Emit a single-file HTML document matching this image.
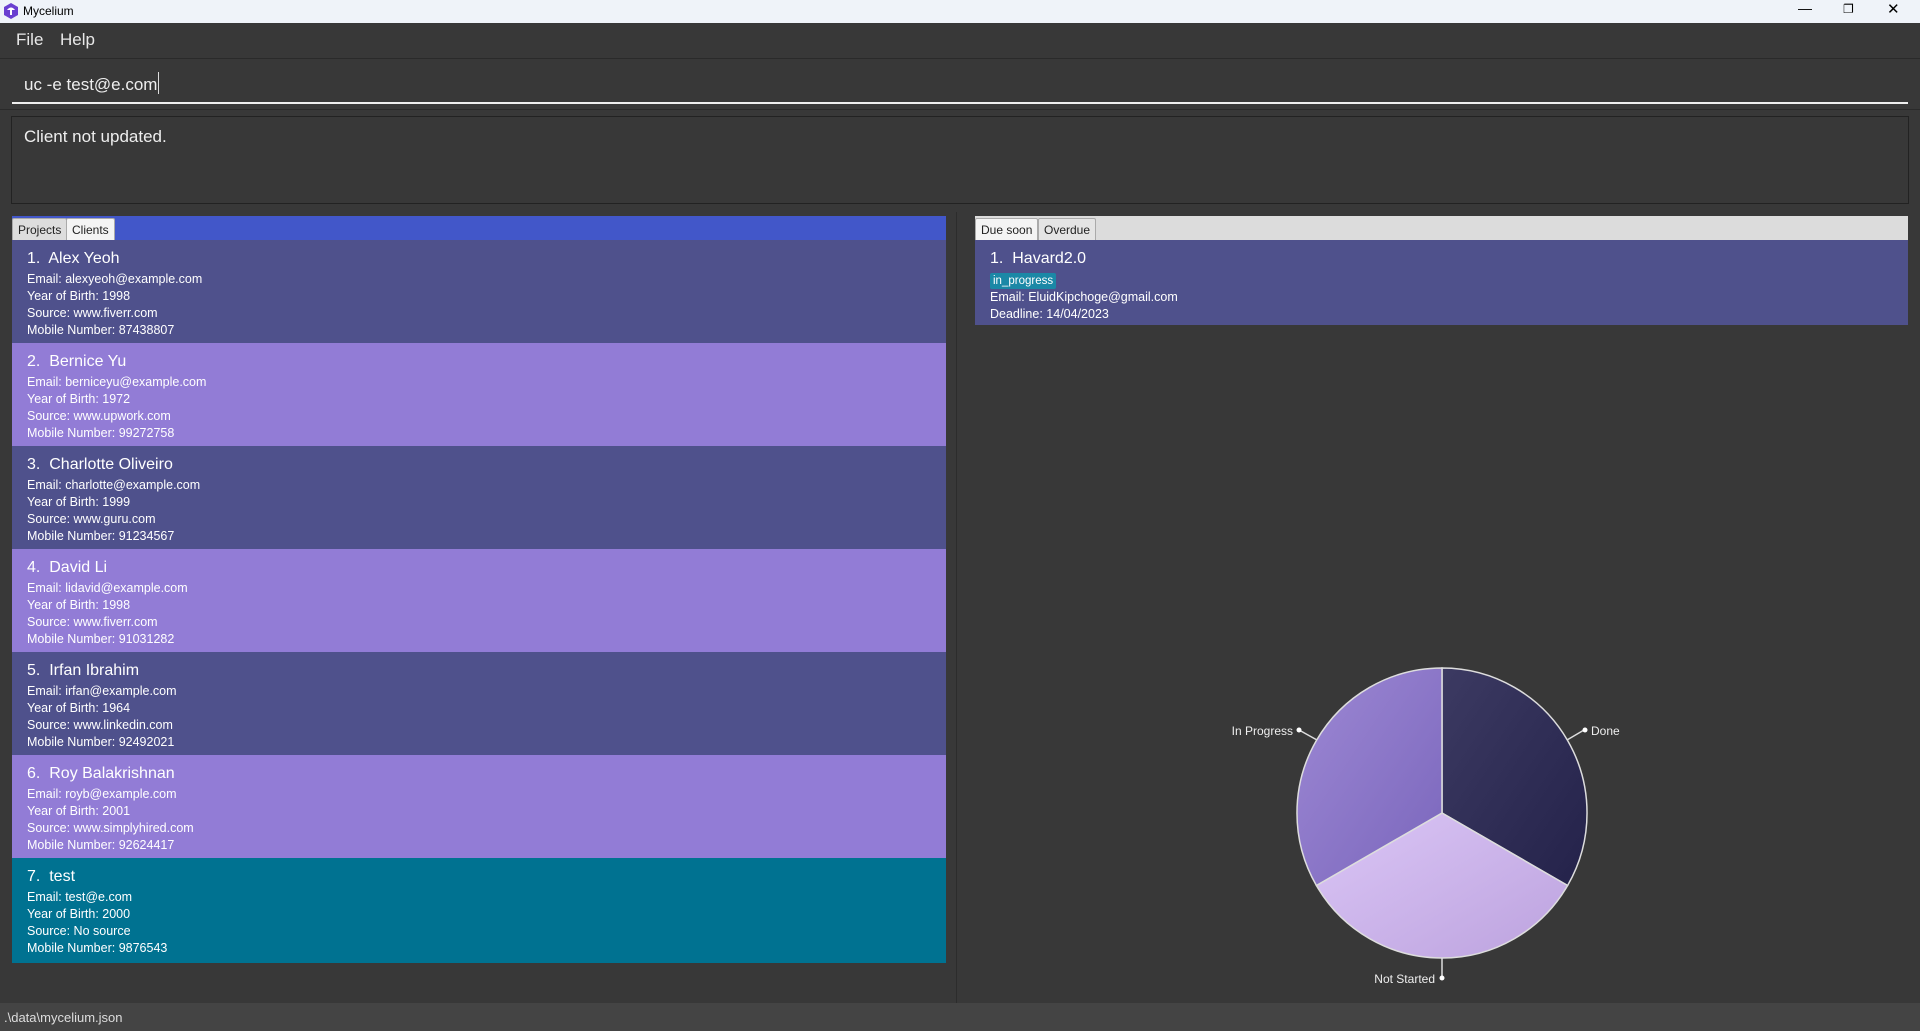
<!DOCTYPE html>
<html><head><meta charset="utf-8"><style>
*{margin:0;padding:0;box-sizing:border-box}
body{width:1920px;height:1031px;background:#383838;font-family:"Liberation Sans",sans-serif;position:relative;overflow:hidden;color:#fff}
.abs{position:absolute}
.title{left:0;top:0;width:1920px;height:23px;background:#eff3f9;color:#000;font-size:12px}
.menu{left:0;top:23px;width:1920px;height:35px;background:#383838;font-size:17px;color:#e8e8e8}
.card{position:absolute;left:12px;width:934px;height:103px;padding:8px 0 0 15px}
.card .t{font-size:16px;line-height:22px;margin-bottom:1px}
.card .l{font-size:12.5px;line-height:17px}
.d{background:#4f518c}.p{background:#927cd6}.g{background:#007291}
.tab{position:absolute;top:218px;height:22px;font-size:12px;color:#222;padding:4px 5px;border:1px solid #aaa;border-bottom:none;border-radius:2px 2px 0 0}
</style></head><body>
<div class="abs title"><svg class="abs" style="left:3px;top:3px" width="16" height="16" viewBox="0 0 16 16"><polygon points="8,0 15,4 15,12 8,16 1,12 1,4" fill="#6a3fd0"/><path d="M4 7 Q8 2 12 7 Z" fill="#fff"/><rect x="7" y="7" width="2" height="5" fill="#fff"/></svg><span class="abs" style="left:23px;top:4px">Mycelium</span>
<span class="abs" style="left:1798px;top:0;font-size:14px">&#8212;</span><span class="abs" style="left:1843px;top:2px;font-size:12px">&#10064;</span><span class="abs" style="left:1887px;top:0;font-size:15px">&#10005;</span></div>
<div class="abs menu"><span class="abs" style="left:16px;top:7px">File</span><span class="abs" style="left:60px;top:7px">Help</span></div>
<div class="abs" style="left:0;top:58px;width:1920px;height:52px;border-top:1px solid #2a2a2a;border-bottom:1px solid #2a2a2a"></div>
<div class="abs" style="left:24px;top:75px;font-size:17px;color:#eee">uc -e test@e.com</div>
<div class="abs" style="left:158px;top:72px;width:1px;height:22px;background:#ddd"></div>
<div class="abs" style="left:12px;top:102px;width:1896px;height:2px;background:#eee"></div>
<div class="abs" style="left:11px;top:116px;width:1898px;height:88px;border:1px solid #222;background:#383838"></div>
<div class="abs" style="left:24px;top:127px;font-size:17px;color:#eee">Client not updated.</div>

<div class="abs" style="left:12px;top:216px;width:934px;height:24px;background:#4257c9"></div>
<div class="tab" style="left:12px;background:#ddd">Projects</div>
<div class="tab" style="left:66px;background:#f4f4f4">Clients</div>

<div class="card d" style="top:240px"><div class="t">1.&nbsp; Alex Yeoh</div><div class="l">Email: alexyeoh@example.com</div><div class="l">Year of Birth: 1998</div><div class="l">Source: www.fiverr.com</div><div class="l">Mobile Number: 87438807</div></div>
<div class="card p" style="top:343px"><div class="t">2.&nbsp; Bernice Yu</div><div class="l">Email: berniceyu@example.com</div><div class="l">Year of Birth: 1972</div><div class="l">Source: www.upwork.com</div><div class="l">Mobile Number: 99272758</div></div>
<div class="card d" style="top:446px"><div class="t">3.&nbsp; Charlotte Oliveiro</div><div class="l">Email: charlotte@example.com</div><div class="l">Year of Birth: 1999</div><div class="l">Source: www.guru.com</div><div class="l">Mobile Number: 91234567</div></div>
<div class="card p" style="top:549px"><div class="t">4.&nbsp; David Li</div><div class="l">Email: lidavid@example.com</div><div class="l">Year of Birth: 1998</div><div class="l">Source: www.fiverr.com</div><div class="l">Mobile Number: 91031282</div></div>
<div class="card d" style="top:652px"><div class="t">5.&nbsp; Irfan Ibrahim</div><div class="l">Email: irfan@example.com</div><div class="l">Year of Birth: 1964</div><div class="l">Source: www.linkedin.com</div><div class="l">Mobile Number: 92492021</div></div>
<div class="card p" style="top:755px"><div class="t">6.&nbsp; Roy Balakrishnan</div><div class="l">Email: royb@example.com</div><div class="l">Year of Birth: 2001</div><div class="l">Source: www.simplyhired.com</div><div class="l">Mobile Number: 92624417</div></div>
<div class="card g" style="top:858px;height:105px"><div class="t">7.&nbsp; test</div><div class="l">Email: test@e.com</div><div class="l">Year of Birth: 2000</div><div class="l">Source: No source</div><div class="l">Mobile Number: 9876543</div></div>

<div class="abs" style="left:956px;top:212px;width:1px;height:791px;background:#2c2c2c"></div>

<div class="abs" style="left:975px;top:216px;width:933px;height:24px;background:#dcdcdc"></div>
<div class="tab" style="left:975px;background:#f4f4f4">Due soon</div>
<div class="tab" style="left:1038px;background:#e4e4e4">Overdue</div>
<div class="card d" style="left:975px;top:240px;width:933px;height:85px"><div class="t">1.&nbsp; Havard2.0</div><div style="display:inline-block;background:#1b88a6;font-size:11.5px;padding:1px 3px;border-radius:2px;line-height:14px">in_progress</div><div class="l">Email: EluidKipchoge@gmail.com</div><div class="l">Deadline: 14/04/2023</div></div>

<svg class="abs" style="left:0;top:0" width="1920" height="1031">
<defs>
<linearGradient id="a" x1="0" y1="0" x2="1" y2="1"><stop offset="0" stop-color="#3c3a62"/><stop offset="1" stop-color="#24224a"/></linearGradient>
<linearGradient id="b" x1="0" y1="0" x2="1" y2="1"><stop offset="0" stop-color="#9d88d4"/><stop offset="1" stop-color="#7a66bc"/></linearGradient>
<linearGradient id="c" x1="0" y1="0" x2="1" y2="1"><stop offset="0" stop-color="#dbc6f6"/><stop offset="1" stop-color="#bca2de"/></linearGradient>
</defs>
<g stroke="#ddd" stroke-width="1.5">
<path d="M1442 813 L1442 668 A145 145 0 0 1 1567.6 885.5 Z" fill="url(#a)"/>
<path d="M1442 813 L1567.6 885.5 A145 145 0 0 1 1316.4 885.5 Z" fill="url(#c)"/>
<path d="M1442 813 L1316.4 885.5 A145 145 0 0 1 1442 668 Z" fill="url(#b)"/>
<path d="M1567 740 L1584 730 M1317 740 L1299 730 M1442 958 L1442 978" fill="none"/>
</g>
<g fill="#fff"><circle cx="1585" cy="730" r="2.5"/><circle cx="1299" cy="730" r="2.5"/><circle cx="1442" cy="978" r="2.5"/></g>
<g font-family="Liberation Sans, sans-serif" font-size="12" fill="#eee">
<text x="1591" y="735">Done</text>
<text x="1293" y="735" text-anchor="end">In Progress</text>
<text x="1435" y="983" text-anchor="end">Not Started</text>
</g>
</svg>

<div class="abs" style="left:0;top:1003px;width:1920px;height:28px;background:#444;font-size:13px;color:#ddd;padding:7px 4px">.\data\mycelium.json</div>
</body></html>
